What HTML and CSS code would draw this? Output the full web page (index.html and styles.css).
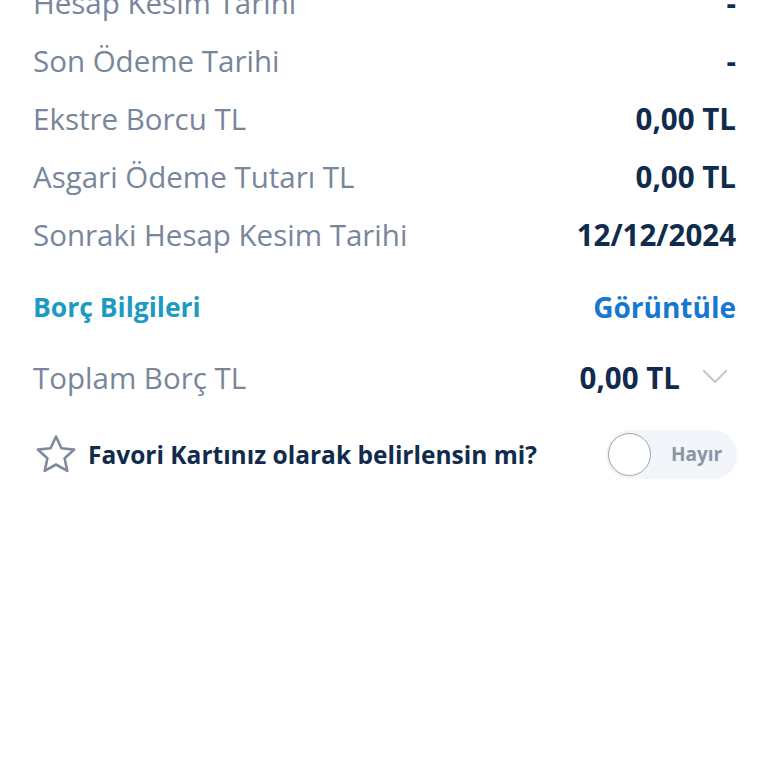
FILE: index.html
```html
<!DOCTYPE html>
<html lang="tr">
<head>
<meta charset="utf-8">
<link rel="stylesheet" href="styles.css">
</head>
<body>
<div class="page">
  <div class="row"><span class="label">Hesap Kesim Tarihi</span><span class="value">-</span></div>
  <div class="row"><span class="label">Son Ödeme Tarihi</span><span class="value">-</span></div>
  <div class="row"><span class="label">Ekstre Borcu TL</span><span class="value">0,00 TL</span></div>
  <div class="row"><span class="label">Asgari Ödeme Tutarı TL</span><span class="value">0,00 TL</span></div>
  <div class="row"><span class="label">Sonraki Hesap Kesim Tarihi</span><span class="value">12/12/2024</span></div>

  <div class="row section"><span class="section-title">Borç Bilgileri</span><span class="link">Görüntüle</span></div>

  <div class="row total"><span class="label">Toplam Borç TL</span>
    <span class="total-value"><span class="value">0,00 TL</span>
      <svg class="chevron" viewBox="0 0 26 16" width="26" height="16"><path d="M2 2 L13 13 L24 2" fill="none" stroke="#c3c9d1" stroke-width="2.2" stroke-linecap="round" stroke-linejoin="round"/></svg>
    </span>
  </div>

  <div class="row fav">
    <div class="fav-left">
      <svg class="star" viewBox="0 0 42 40" width="42" height="40"><path d="M21 2.5 L26.4 14.2 L39.2 15.6 L29.6 24.3 L32.3 36.9 L21 30.5 L9.7 36.9 L12.4 24.3 L2.8 15.6 L15.6 14.2 Z" fill="none" stroke="#7f8b9a" stroke-width="2.6" stroke-linejoin="round"/></svg>
      <span class="fav-text">Favori Kartınız olarak belirlensin mi?</span>
    </div>
    <div class="toggle"><span class="knob"></span><span class="toggle-text">Hayır</span></div>
  </div>
</div>
</body>
</html>
```

FILE: styles.css
```css
html, body {
  margin: 0;
  padding: 0;
  background: #ffffff;
}
body {
  font-family: "Open Sans", "Noto Sans", sans-serif;
  overflow: hidden;
}
.page {
  margin-top: -27px;
  padding: 0 32px 0 33px;
}
.row {
  display: flex;
  justify-content: space-between;
  align-items: center;
  height: 58px;
}
.label {
  font-size: 29.5px;
  color: #77869a;
  font-weight: 500;
}
.value {
  font-size: 29.5px;
  color: #102b4c;
  font-weight: 700;
}
.section {
  margin-top: 15px;
}
.section-title {
  font-size: 26.5px;
  font-weight: 700;
  color: #1c9bc2;
}
.link {
  font-size: 28px;
  font-weight: 700;
  color: #1677d2;
}
.total {
  margin-top: 12px;
}
.total-value {
  display: flex;
  align-items: center;
  gap: 22px;
}
.chevron {
  margin-right: 8px;
}
.fav {
  margin-top: 19px;
}
.fav-left {
  display: flex;
  align-items: center;
  gap: 11px;
}
.star {
  margin-left: 2px;
}
.fav-text {
  font-size: 24.5px;
  font-weight: 700;
  color: #102b4c;
}
.toggle {
  display: flex;
  align-items: center;
  width: 129px;
  height: 47px;
  box-sizing: border-box;
  border-radius: 24px;
  background: #f2f5f9;
  box-shadow: 0 0 2px rgba(120, 135, 155, 0.25);
  padding-left: 1px;
}
.knob {
  width: 43px;
  height: 43px;
  box-sizing: border-box;
  border-radius: 50%;
  background: #ffffff;
  border: 1.5px solid #9aa3ad;
}
.toggle-text {
  margin-left: 20px;
  font-size: 19px;
  font-weight: 700;
  color: #8a96a6;
}
```
